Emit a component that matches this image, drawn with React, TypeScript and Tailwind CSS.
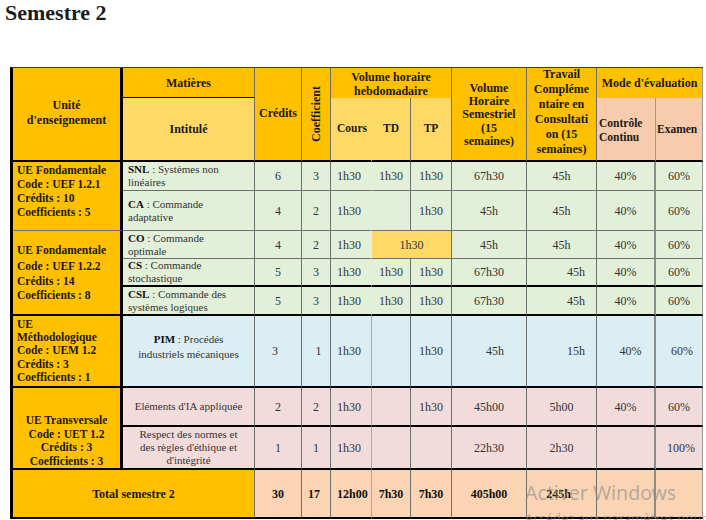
import React from "react";

const GOLD = "bg-[#FFC000]";
const LGOLD = "bg-[#FFD966]";
const GREEN = "bg-[#E2EFD9]";
const BLUE = "bg-[#DAEEF3]";
const PINK = "bg-[#F2DBDB]";
const PEACH = "bg-[#FBD4B4]";
const SALMON = "bg-[#F8CBAD]";

const THIN = "border-b border-b-[#6f6f6f]";
const THICK = "border-b-2 border-b-black";
const VR = "border-r border-r-[#6f6f6f]";

type RowData = {
  row: string;
  bg: string;
  bb: string;
  title?: React.ReactNode;
  titleCls?: string;
  cr: string;
  crC?: string;
  co: string;
  coC?: string;
  cours: string;
  coursB: string;
  coursC?: string;
  td?: string;
  tp?: string;
  merged?: string;
  vs: string;
  vsC?: string;
  tc: string;
  tcC?: string;
  cc: string;
  ccC?: string;
  ex: string;
  exC?: string;
  bold?: boolean;
};

const LEFT = "justify-start text-left pl-[5px] leading-[13px]";
const CENTER = "justify-center text-center leading-[13.5px]";

const rows: RowData[] = [
  {
    row: "row-start-3",
    bg: GREEN,
    bb: THIN,
    title: (
      <span>
        <b className="text-[#111]">SNL</b> : Systèmes non
        <br />
        linéaires
      </span>
    ),
    titleCls: LEFT,
    cr: "6",
    co: "3",
    cours: "1h30",
    coursB: "border-r border-r-transparent",
    td: "1h30",
    tp: "1h30",
    vs: "67h30",
    tc: "45h",
    cc: "40%",
    ex: "60%",
  },
  {
    row: "row-start-4",
    bg: GREEN,
    bb: THIN,
    title: (
      <span>
        <b className="text-[#111]">CA</b> : Commande
        <br />
        adaptative
      </span>
    ),
    titleCls: LEFT,
    cr: "4",
    co: "2",
    cours: "1h30",
    coursB: "border-r border-r-transparent",
    td: "",
    tp: "1h30",
    vs: "45h",
    tc: "45h",
    cc: "40%",
    ex: "60%",
  },
  {
    row: "row-start-5",
    bg: GREEN,
    bb: THIN,
    title: (
      <span>
        <b className="text-[#111]">CO</b> : Commande
        <br />
        optimale
      </span>
    ),
    titleCls: LEFT,
    cr: "4",
    co: "2",
    cours: "1h30",
    coursB: "border-r border-r-transparent",
    merged: "1h30",
    vs: "45h",
    tc: "45h",
    cc: "40%",
    ex: "60%",
  },
  {
    row: "row-start-6",
    bg: GREEN,
    bb: THICK,
    title: (
      <span>
        <b className="text-[#111]">CS</b> : Commande
        <br />
        stochastique
      </span>
    ),
    titleCls: LEFT,
    cr: "5",
    co: "3",
    cours: "1h30",
    coursB: "border-r border-r-transparent",
    td: "1h30",
    tp: "1h30",
    vs: "67h30",
    tc: "45h",
    tcC: "justify-end pr-[11px]",
    cc: "40%",
    ex: "60%",
  },
  {
    row: "row-start-7",
    bg: GREEN,
    bb: THICK,
    title: (
      <span>
        <b className="text-[#111]">CSL</b> : Commande des
        <br />
        systèmes logiques
      </span>
    ),
    titleCls: LEFT,
    cr: "5",
    co: "3",
    cours: "1h30",
    coursB: "border-r border-r-transparent",
    td: "1h30",
    tp: "1h30",
    vs: "67h30",
    tc: "45h",
    tcC: "justify-end pr-[11px]",
    cc: "40%",
    ex: "60%",
  },
  {
    row: "row-start-8",
    bg: BLUE,
    bb: THICK,
    title: (
      <span>
        <b className="text-[#111]">PIM</b> : Procédés
        <br />
        industriels mécaniques
      </span>
    ),
    titleCls: "justify-center text-center leading-[15px] pb-[8px]",
    cr: "3",
    crC: "pr-[6px]",
    co: "1",
    coC: "pl-[5px]",
    cours: "1h30",
    coursB: "border-r border-r-[#a8a8a8]",
    td: "",
    tp: "1h30",
    vs: "45h",
    vsC: "pl-[12px]",
    tc: "15h",
    tcC: "justify-end pr-[11px]",
    cc: "40%",
    ccC: "pl-[10px]",
    ex: "60%",
    exC: "pl-[6px]",
  },
  {
    row: "row-start-9",
    bg: PINK,
    bb: THICK,
    title: <span>Eléments d'IA appliquée</span>,
    titleCls: CENTER,
    cr: "2",
    co: "2",
    cours: "1h30",
    coursB: "border-r border-r-[#a8a8a8]",
    td: "",
    tp: "1h30",
    vs: "45h00",
    tc: "5h00",
    cc: "40%",
    ex: "60%",
  },
  {
    row: "row-start-10",
    bg: PINK,
    bb: THICK,
    title: (
      <span>
        Respect des normes et
        <br />
        des règles d'éthique et
        <br />
        d'intégrité
      </span>
    ),
    titleCls: "justify-center text-center leading-[13.3px]",
    cr: "1",
    co: "1",
    cours: "1h30",
    coursB: "border-r border-r-[#a8a8a8]",
    td: "",
    tp: "",
    vs: "22h30",
    tc: "2h30",
    cc: "",
    ex: "100%",
    exC: "pl-[4px]",
  },
  {
    row: "row-start-11",
    bg: PEACH,
    bb: THICK,
    cr: "30",
    co: "17",
    coC: "pr-[4px]",
    cours: "12h00",
    coursB: "border-r border-r-[#a8a8a8]",
    coursC: "justify-center pl-0",
    td: "7h30",
    tp: "7h30",
    vs: "405h00",
    tc: "245h",
    tcC: "pr-[6px]",
    cc: "",
    ex: "",
    bold: true,
  },
];

function BodyRow({ r }: { r: RowData }) {
  const txt = r.bold
    ? "text-[12px] font-bold text-[#111]"
    : "text-[12px] text-[#333]";
  const cell = `${r.row} ${r.bg} ${r.bb} flex items-center ${txt}`;
  return (
    <>
      {r.title !== undefined && (
        <div
          className={`${r.row} col-start-2 ${r.bg} ${r.bb} ${VR} flex items-center text-[11px] text-[#333] ${r.titleCls}`}
        >
          {r.title}
        </div>
      )}
      <div className={`${cell} col-start-3 ${VR} justify-center ${r.crC ?? ""}`}>{r.cr}</div>
      <div className={`${cell} col-start-4 ${VR} justify-center ${r.coC ?? ""}`}>{r.co}</div>
      <div className={`${cell} col-start-5 ${r.coursB} justify-start pl-[6px] ${r.coursC ?? ""}`}>
        {r.cours}
      </div>
      {r.merged !== undefined ? (
        <div className={`${r.row} col-start-6 col-span-2 ${LGOLD} ${r.bb} ${VR} flex items-center justify-center ${txt}`}>
          {r.merged}
        </div>
      ) : (
        <>
          <div className={`${cell} col-start-6 ${VR} justify-center`}>{r.td}</div>
          <div className={`${cell} col-start-7 ${VR} justify-center`}>{r.tp}</div>
        </>
      )}
      <div className={`${cell} col-start-8 ${VR} justify-center ${r.vsC ?? ""}`}>{r.vs}</div>
      <div className={`${cell} col-start-9 ${VR} justify-center ${r.tcC ?? ""}`}>{r.tc}</div>
      <div className={`${cell} col-start-10 border-r-2 border-r-[#8c8c8c] justify-center ${r.ccC ?? ""}`}>
        {r.cc}
      </div>
      <div className={`${cell} col-start-11 border-r border-r-[#9a9a9a] justify-center ${r.exC ?? ""}`}>
        {r.ex}
      </div>
    </>
  );
}

export default function App() {
  return (
    <div className="relative w-[706px] h-[520px] overflow-hidden bg-white font-['Liberation_Serif','Times_New_Roman',serif] text-[#222]">
      <h1 className="pl-[5px] text-[22px] font-bold leading-[25px] text-[#1c1c1c]">Semestre 2</h1>
      <div className="mt-[42px] ml-[10px] grid w-[693px] grid-cols-[110px_132px_47px_29px_41px_39px_41px_75px_70px_59px_47px] grid-rows-[30px_64px_29px_40px_28px_28px_29px_72px_39px_43px_49px] border-l-[3px] border-t border-l-black border-t-[#3a3a3a]">
        {/* Header */}
        <div className={`row-start-1 row-span-2 col-start-1 ${GOLD} border-r-[3px] border-r-black ${THICK} flex items-center justify-center text-center text-[12px] font-bold leading-[15px] text-[#1a1a1a] pb-[2px]`}>
          <span>
            Unité
            <br />
            d'enseignement
          </span>
        </div>
        <div className={`row-start-1 col-start-2 ${GOLD} ${VR} border-b border-b-black flex items-center justify-center text-[12px] font-bold text-[#1a1a1a]`}>
          Matières
        </div>
        <div className={`row-start-2 col-start-2 ${LGOLD} ${VR} ${THICK} flex items-center justify-center text-[12px] font-bold text-[#1a1a1a]`}>
          Intitulé
        </div>
        <div className={`row-start-1 row-span-2 col-start-3 ${GOLD} ${VR} ${THICK} flex items-center justify-center text-[12px] font-bold text-[#1a1a1a] pb-[2px]`}>
          Crédits
        </div>
        <div className={`row-start-1 row-span-2 col-start-4 ${GOLD} ${VR} ${THICK} flex items-center justify-center text-[12px] font-bold text-[#1a1a1a]`}>
          <span className="[writing-mode:vertical-rl] rotate-180 leading-[14px]">Coefficient</span>
        </div>
        <div className={`row-start-1 col-start-5 col-span-3 ${GOLD} ${VR} flex items-center justify-center text-center text-[12px] font-bold leading-[14px] text-[#1a1a1a] pt-[1px]`}>
          <span>
            Volume horaire
            <br />
            hebdomadaire
          </span>
        </div>
        <div className={`row-start-2 col-start-5 ${LGOLD} border-r border-r-transparent ${THICK} flex items-center justify-center text-[11.5px] font-bold text-[#1a1a1a] pl-[2px]`}>
          Cours
        </div>
        <div className={`row-start-2 col-start-6 ${LGOLD} ${VR} ${THICK} flex items-center justify-center text-[11.5px] font-bold text-[#1a1a1a]`}>
          TD
        </div>
        <div className={`row-start-2 col-start-7 ${LGOLD} ${VR} ${THICK} flex items-center justify-center text-[11.5px] font-bold text-[#1a1a1a]`}>
          TP
        </div>
        <div className={`row-start-1 row-span-2 col-start-8 ${GOLD} ${VR} ${THICK} flex items-center justify-center text-center text-[12px] font-bold leading-[13.3px] text-[#1a1a1a] pt-[2px]`}>
          <span>
            Volume
            <br />
            Horaire
            <br />
            Semestriel
            <br />
            (15
            <br />
            semaines)
          </span>
        </div>
        <div className={`row-start-1 row-span-2 col-start-9 ${GOLD} ${VR} ${THICK} flex items-center justify-center text-center text-[12px] font-bold leading-[15px] text-[#1a1a1a] pb-[4px]`}>
          <span>
            Travail
            <br />
            Compléme
            <br />
            ntaire en
            <br />
            Consultati
            <br />
            on (15
            <br />
            semaines)
          </span>
        </div>
        <div className={`row-start-1 col-start-10 col-span-2 ${GOLD} border-r border-r-[#9a9a9a] flex items-center justify-center text-[12px] font-bold text-[#1a1a1a]`}>
          Mode d'évaluation
        </div>
        <div className={`row-start-2 col-start-10 ${SALMON} border-r border-r-[#9a9a9a] ${THICK} flex items-center justify-start text-left text-[11.5px] font-bold leading-[14px] text-[#1a1a1a] pl-[2px] pt-[2px]`}>
          <span>
            Contrôle
            <br />
            Continu
          </span>
        </div>
        <div className={`row-start-2 col-start-11 ${SALMON} border-r border-r-[#9a9a9a] ${THICK} flex items-center justify-start text-[11.5px] font-bold text-[#1a1a1a] pl-[1px] pt-[2px]`}>
          Examen
        </div>

        {/* Unit column */}
        <div className={`row-start-3 row-span-2 col-start-1 ${GOLD} border-r-[3px] border-r-black ${THIN} flex flex-col justify-start pl-[4px] pt-[1px] text-[11.5px] font-bold leading-[14px] text-[#1a1a1a]`}>
          <span>UE Fondamentale</span>
          <span>Code : UEF 1.2.1</span>
          <span>Crédits : 10</span>
          <span>Coefficients : 5</span>
        </div>
        <div className={`row-start-5 row-span-3 col-start-1 ${GOLD} border-r-[3px] border-r-black ${THICK} flex flex-col justify-center pl-[4px] text-[11.5px] font-bold leading-[14.4px] text-[#1a1a1a]`}>
          <span className="mb-[2px]">UE Fondamentale</span>
          <span>Code : UEF 1.2.2</span>
          <span>Crédits : 14</span>
          <span>Coefficients : 8</span>
        </div>
        <div className={`row-start-8 col-start-1 ${GOLD} border-r-[3px] border-r-black ${THICK} flex flex-col justify-center pl-[4px] text-[11.5px] font-bold leading-[13.2px] text-[#1a1a1a]`}>
          <span>UE</span>
          <span>Méthodologique</span>
          <span>Code : UEM 1.2</span>
          <span>Crédits : 3</span>
          <span>Coefficients : 1</span>
        </div>
        <div className={`row-start-9 row-span-2 col-start-1 ${GOLD} border-r-[3px] border-r-black ${THICK} flex flex-col items-center justify-end text-center text-[11.5px] font-bold leading-[13.4px] text-[#1a1a1a]`}>
          <span>UE Transversale</span>
          <span>Code : UET 1.2</span>
          <span>Crédits : 3</span>
          <span>Coefficients : 3</span>
        </div>
        <div className={`row-start-11 col-start-1 col-span-2 ${GOLD} ${VR} ${THICK} flex items-center justify-center text-[12px] font-bold text-[#1a1a1a]`}>
          Total semestre 2
        </div>

        {rows.map((r) => (
          <BodyRow key={r.row} r={r} />
        ))}
      </div>

      <div className="pointer-events-none absolute left-[525px] top-[480px] font-['Noto_Sans','Open_Sans',sans-serif] text-[19.5px] leading-[26px] text-[#8a8a8a]/60">
        Activer Windows
      </div>
      <div className="pointer-events-none absolute left-[525px] top-[509px] whitespace-nowrap font-['Noto_Sans','Open_Sans',sans-serif] text-[13px] leading-[18px] text-[#8a8a8a]/60">
        Accédez aux paramètres pour activer Windows.
      </div>
    </div>
  );
}
